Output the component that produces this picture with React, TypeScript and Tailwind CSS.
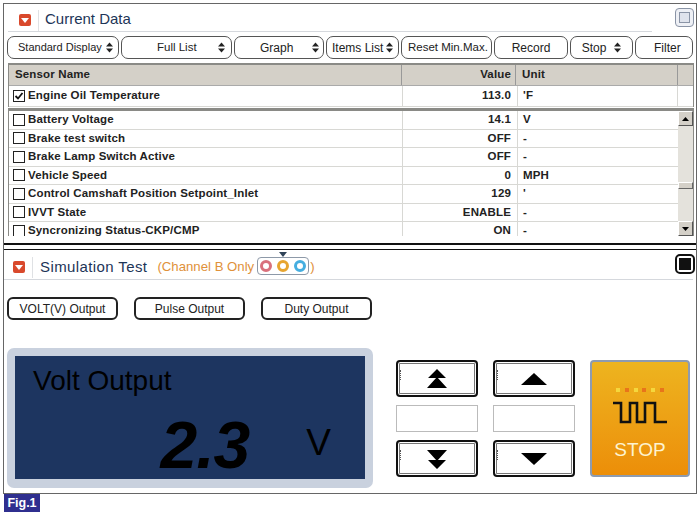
import React from "react";

const sans = "font-['Liberation_Sans',Arial,sans-serif]";

function Updown() {
  return (
    <svg width="7" height="11" viewBox="0 0 7 11" className="shrink-0">
      <path d="M3.5 0.5 L7 4.5 H0 Z M0 6.5 H7 L3.5 10.5 Z" fill="#222" />
    </svg>
  );
}

function ToolBtn({ w, label, arrows, cls }: { w: string; label: string; arrows?: boolean; cls?: string }) {
  return (
    <div className={`${w} h-[23px] shrink-0 rounded-[7px] border border-[#555] bg-white flex items-center text-[#222] whitespace-nowrap ${cls ?? "justify-center gap-1 text-[12px]"}`}>
      <span>{label}</span>
      {arrows && <Updown />}
    </div>
  );
}

function Box({ checked }: { checked?: boolean }) {
  return (
    <span className="w-[12px] h-[12px] shrink-0 border border-[#222] bg-white flex items-center justify-center">
      {checked && (
        <svg width="10" height="10" viewBox="0 0 10 10">
          <path d="M1.5 5 L4 7.5 L8.5 2" stroke="#111" strokeWidth="1.8" fill="none" />
        </svg>
      )}
    </span>
  );
}

function Row({ name, value, unit, checked, h = "h-[18.5px]" }: { name: string; value: string; unit: string; checked?: boolean; h?: string }) {
  return (
    <div className={`flex ${h} shrink-0 border-b border-[#d8d8d4] text-[11.5px] font-bold tracking-[0.15px] text-[#222] items-stretch`}>
      <div className="w-[394px] shrink-0 flex items-center gap-[3px] pl-[4px] border-r border-[#d8d8d4] whitespace-nowrap">
        <Box checked={checked} />
        <span>{name}</span>
      </div>
      <div className="w-[115px] shrink-0 flex items-center justify-end pr-[6px] border-r border-[#d8d8d4]">{value}</div>
      <div className="flex-1 flex items-center pl-[5px]">{unit}</div>
    </div>
  );
}

function Red() {
  return (
    <span className="w-[12px] h-[12px] rounded-[2px] bg-[#d9492c] flex items-center justify-center shrink-0">
      <svg width="8" height="5" viewBox="0 0 8 5">
        <path d="M0 0 H8 L4 5 Z" fill="#fff" />
      </svg>
    </span>
  );
}

function ArrowBtn({ d }: { d: string }) {
  return (
    <div className="relative h-[37px] rounded-[4px] border-2 border-[#111] bg-white shadow-[inset_0_0_0_1px_#fff,inset_0_0_0_2px_#777] flex items-center justify-center">
      <span className="absolute left-[2px] top-[8px] w-[1px] h-[10px] border-l border-dotted border-[#555]" />
      <svg width="28" height="20" viewBox="0 0 28 20">
        <path d={d} fill="#000" />
      </svg>
    </div>
  );
}

function OutBtn({ label }: { label: string }) {
  return (
    <div className="w-[111px] h-[23px] rounded-[6px] border-2 border-[#222] bg-white flex items-center justify-center text-[12px] text-[#222]">
      {label}
    </div>
  );
}

const rows: [string, string, string][] = [
  ["Battery Voltage", "14.1", "V"],
  ["Brake test switch", "OFF", "-"],
  ["Brake Lamp Switch Active", "OFF", "-"],
  ["Vehicle Speed", "0", "MPH"],
  ["Control Camshaft Position Setpoint_Inlet", "129", "'"],
  ["IVVT State", "ENABLE", "-"],
  ["Syncronizing Status-CKP/CMP", "ON", "-"],
];

const up2 = "M14 0 L23 9 H5 Z M14 8 L24 19 H4 Z";
const down2 = "M4 1 H24 L14 12 Z M5 11 H23 L14 20 Z";
const up1 = "M14 4 L27 16 H1 Z";
const down1 = "M1 4 H27 L14 16 Z";

export default function App() {
  return (
    <div className={`w-[700px] h-[515px] bg-white overflow-hidden pt-[3px] pl-[3px] ${sans}`}>
      <div className="w-[694px] h-[491px] border border-[#666] flex flex-col">
        {/* Current Data header */}
        <div className="h-[28px] shrink-0 flex items-start relative">
          <div className="w-[644px] h-[28px] ml-[4px] border-b border-[#d5d8dd] flex items-center">
            <div className="pl-[11px] pr-[7px] h-[21px] mt-[5px] border-r border-[#dfe1e4] flex items-center">
              <Red />
            </div>
            <span className="ml-[6px] text-[15px] text-[#1d3557] leading-none mt-[1px]">Current Data</span>
          </div>
          <div className="ml-auto mr-[2px] mt-[4px] w-[19px] h-[19px] rounded-[4px] border border-[#8a94a6] bg-[#eef0f5] flex items-center justify-center">
            <span className="w-[11px] h-[11px] border border-[#8a94a6] bg-[#dfe3ec]" />
          </div>
        </div>

        {/* Toolbar */}
        <div className="h-[23px] mt-[4px] ml-[3px] flex shrink-0 gap-[2px]">
          <ToolBtn w="w-[112px]" label="Standard Display" arrows cls="text-[11px] pl-[10px] gap-[4px]" />
          <ToolBtn w="w-[111px]" label="Full List" arrows cls="text-[11.5px] pl-[35px] gap-[21px]" />
          <ToolBtn w="w-[90px]" label="Graph" arrows cls="text-[12px] pl-[25px] gap-[19px]" />
          <ToolBtn w="w-[73px]" label="Items List" arrows cls="text-[12px] pl-[5px] gap-[3px]" />
          <ToolBtn w="w-[91px]" label="Reset Min.Max." cls="text-[11.5px] pl-[6px]" />
          <ToolBtn w="w-[74px]" label="Record" />
          <ToolBtn w="w-[63px]" label="Stop" arrows cls="text-[12px] justify-center gap-[8px]" />
          <ToolBtn w="w-[58px]" label="Filter" cls="text-[12px] pl-[18px]" />
        </div>

        {/* Fixed table */}
        <div className="mt-[4px] ml-[4px] w-[686px] shrink-0 border-x border-t-2 border-[#8a8a86]">
          <div className="flex h-[21px] bg-[#d4d0c8] text-[11.5px] font-bold tracking-[0.15px] text-[#222] border-b border-[#aaa]">
            <div className="w-[393px] shrink-0 flex items-center pl-[6px] border-r border-[#999]">Sensor Name</div>
            <div className="w-[114px] shrink-0 flex items-center justify-end pr-[4px] border-r border-[#999]">Value</div>
            <div className="w-[162px] shrink-0 flex items-center pl-[6px] border-r border-[#999]">Unit</div>
          </div>
          <div className="relative">
            <Row name="Engine Oil Temperature" value="113.0" unit="'F" checked h="h-[21px]" />
            <span className="absolute right-[15px] top-0 h-[21px] border-l border-[#d8d8d4]" />
          </div>
        </div>

        {/* Scroll table */}
        <div className="mt-[1px] ml-[4px] w-[686px] h-[128px] shrink-0 border-x border-t-[3px] border-[#8a8a86] flex overflow-hidden">
          <div className="flex-1 flex flex-col overflow-hidden">
            {rows.map((r) => (
              <Row key={r[0]} name={r[0]} value={r[1]} unit={r[2]} />
            ))}
          </div>
          <div className="w-[15px] shrink-0 flex flex-col bg-[#e4e2dc]">
            <div className="h-[15px] bg-[#d4d0c8] border border-t-white border-l-white border-r-[#555] border-b-[#555] flex items-center justify-center">
              <svg width="7" height="4" viewBox="0 0 7 4"><path d="M3.5 0 L7 4 H0 Z" fill="#000" /></svg>
            </div>
            <div className="h-[56px]" />
            <div className="h-[7px] bg-[#d4d0c8] border border-t-white border-l-white border-r-[#666] border-b-[#666]" />
            <div className="flex-1" />
            <div className="h-[15px] bg-[#d4d0c8] border border-t-white border-l-white border-r-[#555] border-b-[#555] flex items-center justify-center">
              <svg width="7" height="4" viewBox="0 0 7 4"><path d="M0 0 H7 L3.5 4 Z" fill="#000" /></svg>
            </div>
          </div>
        </div>

        {/* Double divider */}
        <div className="mt-[7px] h-[7px] shrink-0 border-t-[2px] border-b border-[#111]" />

        {/* Simulation Test header */}
        <div className="h-[30px] shrink-0 flex items-center border-b border-[#d5d8dd] mr-[3px] pt-[4px]">
          <div className="pl-[9px] pr-[7px] h-[21px] mt-[1px] border-r border-[#dfe1e4] flex items-center">
            <Red />
          </div>
          <span className="ml-[7px] mt-[1px] text-[15px] text-[#1d3557] tracking-[0.4px]">Simulation Test</span>
          <span className="ml-[10px] mt-[1px] text-[13.2px] text-[#e0913a]">(Channel B Only</span>
          <div className="relative ml-[3px] mt-[-1px] w-[52px] h-[18px] rounded-[4px] border border-[#8d99a8] flex items-center justify-center gap-[5px]">
            <svg width="8" height="5" viewBox="0 0 8 5" className="absolute left-[21px] top-[-6px]"><path d="M0 0 H8 L4 5 Z" fill="#2f4358" /></svg>
            <span className="w-[12px] h-[12px] rounded-full border-[3.5px] border-[#d9707c] bg-white" />
            <span className="w-[12px] h-[12px] rounded-full border-[3.5px] border-[#e7a530] bg-white" />
            <span className="w-[12px] h-[12px] rounded-full border-[3.5px] border-[#45aee0] bg-white" />
          </div>
          <span className="ml-[1px] mt-[1px] text-[13.2px] text-[#e0913a]">)</span>
          <div className="ml-auto mt-[-5px] mr-[-2px] w-[20px] h-[20px] rounded-[5px] border-2 border-[#111] bg-white flex items-center justify-center">
            <span className="w-[12px] h-[12px] bg-[#111]" />
          </div>
        </div>

        {/* Output buttons */}
        <div className="mt-[17px] ml-[3px] flex gap-[16px] shrink-0">
          <OutBtn label="VOLT(V) Output" />
          <OutBtn label="Pulse Output" />
          <OutBtn label="Duty Output" />
        </div>

        {/* Bottom */}
        <div className="mt-[28px] ml-[3px] flex shrink-0">
          <div className="w-[366px] h-[140px] shrink-0 rounded-[7px] bg-[#c9d1de] p-[8px]">
            <div className="h-[123px] bg-[#1d3560] text-black flex flex-col">
              <div className="text-[28px] leading-none pl-[18px] pt-[11px]">Volt Output</div>
              <div className="flex items-end justify-end pr-[34px] mt-[17px]">
                <span className="font-bold italic text-[66px] leading-none tracking-[-1px]">2.3</span>
                <span className="ml-[57px] mb-[17px] text-[37px] leading-none font-light">V</span>
              </div>
            </div>
          </div>

          <div className="ml-[23px] mt-[12px] grid grid-cols-[82px_82px] gap-x-[15px] h-[117px] grid-rows-[37px_27px_37px] gap-y-[8px] shrink-0">
            <ArrowBtn d={up2} />
            <ArrowBtn d={up1} />
            <div className="border border-[#bbb] bg-white" />
            <div className="border border-[#bbb] bg-white" />
            <ArrowBtn d={down2} />
            <ArrowBtn d={down1} />
          </div>

          <div className="ml-[15px] mt-[12px] w-[100px] h-[117px] shrink-0 rounded-[4px] border-2 border-[#8d9bb0] bg-gradient-to-b from-[#edb41f] to-[#ec8e08] flex flex-col items-center pt-[26px]">
            <div className="flex gap-[4.7px]">
              {["bg-[#f5d73c]", "bg-[#e8741a]", "bg-[#f5d73c]", "bg-[#e8741a]", "bg-[#f5d73c]", "bg-[#e8741a]"].map((c, i) => (
                <span key={i} className={`w-[4px] h-[4px] ${c}`} />
              ))}
            </div>
            <svg width="54" height="23" viewBox="0 0 54 23" className="mt-[9px]">
              <path d="M0 2 H8 V21 H17 V2 H24 V21 H32 V2 H42 V21 H54" stroke="#111" strokeWidth="2.6" fill="none" />
            </svg>
            <span className="mt-[16px] text-[19px] leading-none text-[#fdf3d0]">STOP</span>
          </div>
        </div>
      </div>

      <div className="mt-[0px] ml-[1px] w-[36px] h-[18px] bg-[#2f2f8f] text-white text-[12.5px] font-bold flex items-center justify-center">
        Fig.1
      </div>
    </div>
  );
}
